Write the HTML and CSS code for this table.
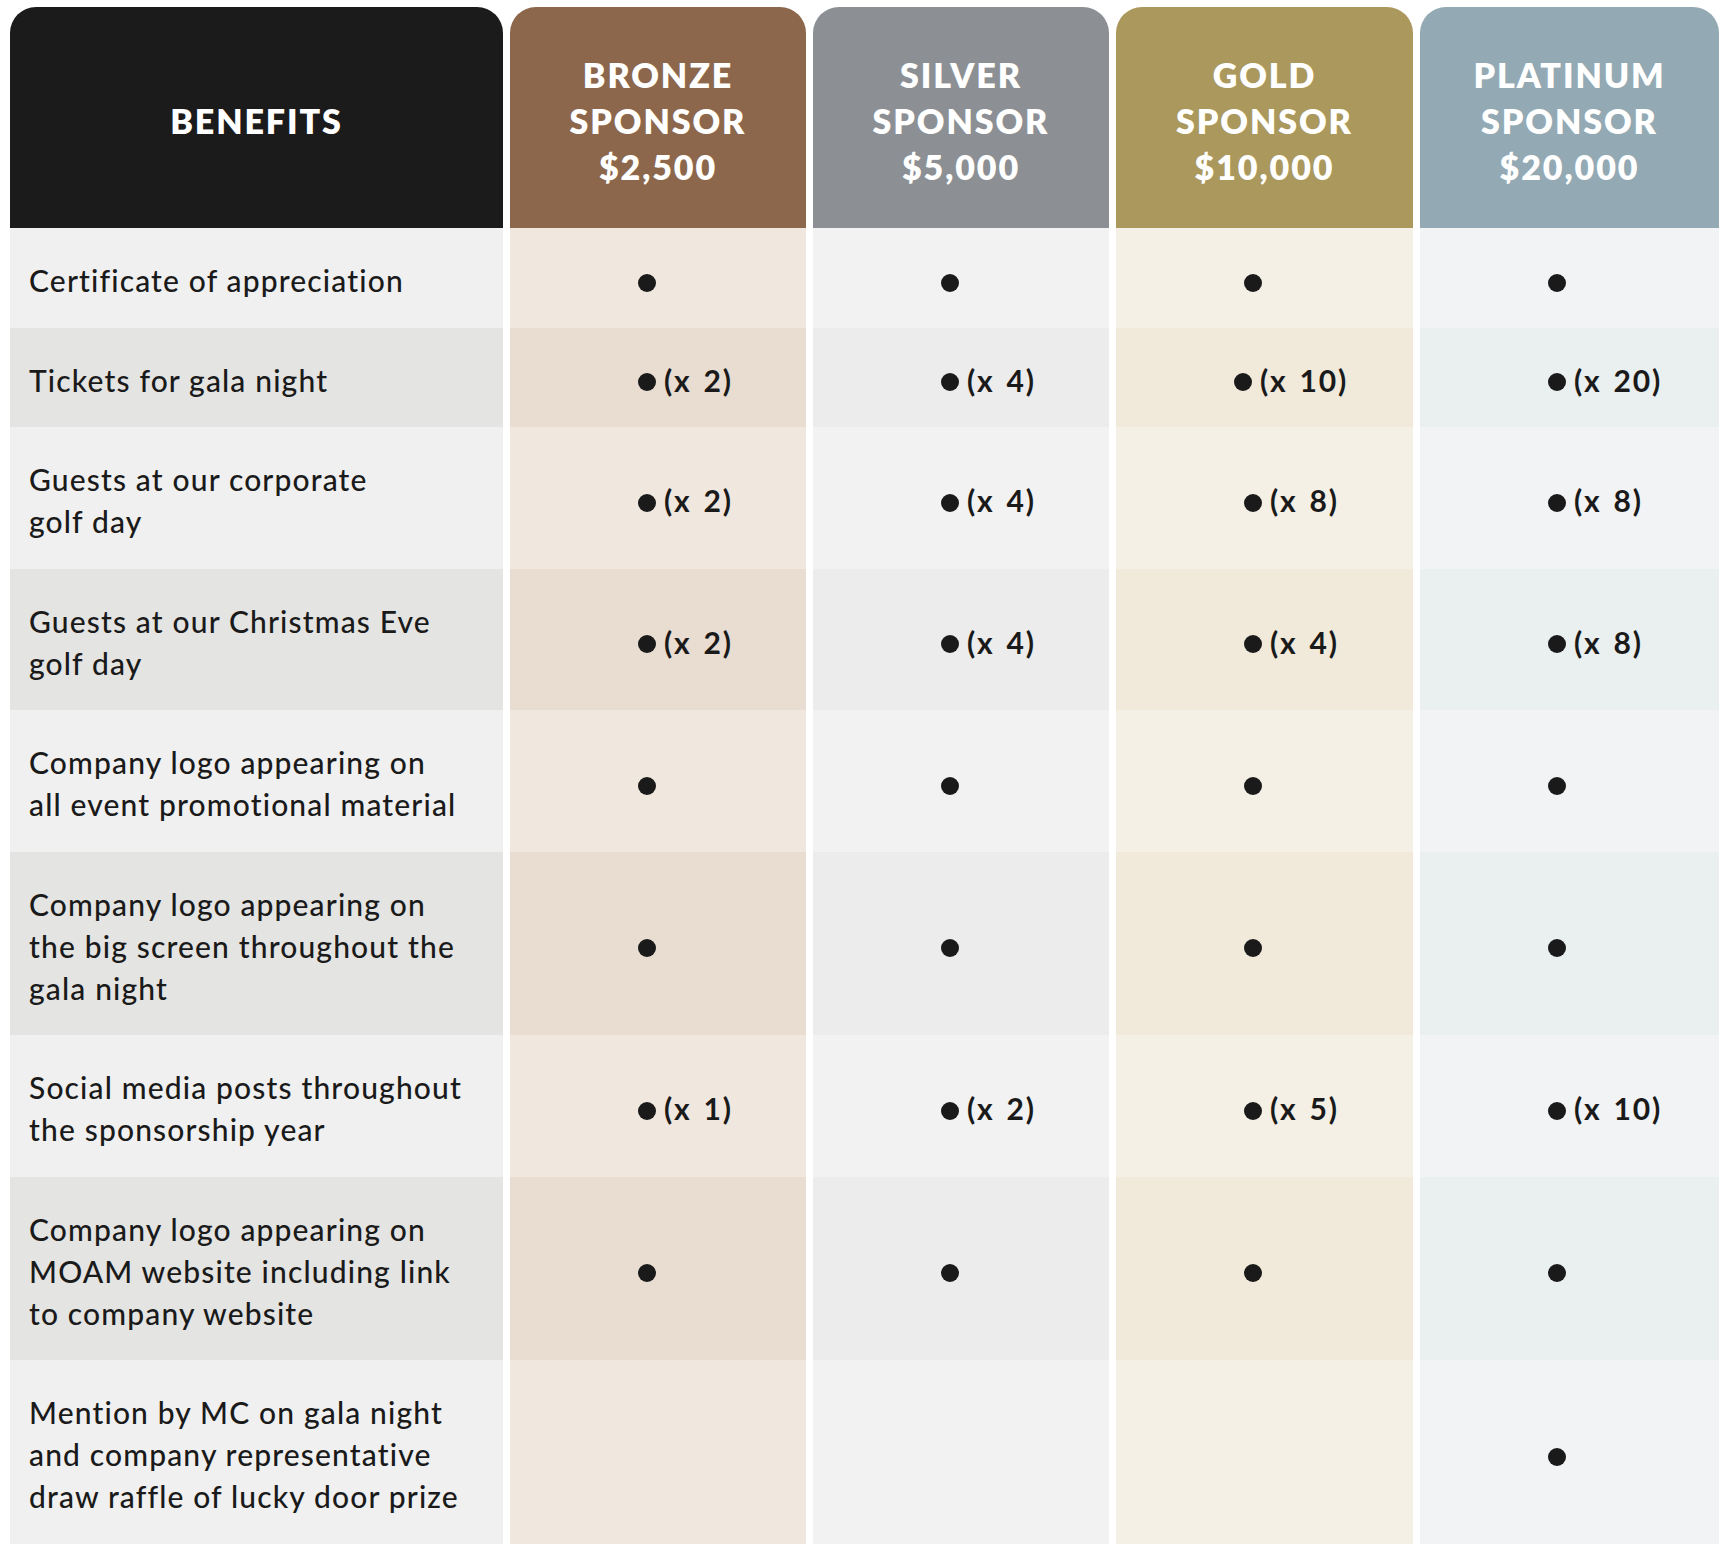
FILE: index.html
```html
<!DOCTYPE html>
<html lang="en">
<head>
<meta charset="utf-8">
<title>Sponsorship Benefits</title>
<link rel="stylesheet" href="styles.css">
</head>
<body>
<div class="sheet">
  <div class="row head">
    <div class="hcell c-benefit">BENEFITS</div>
    <div class="hcell c-bronze">BRONZE<br>SPONSOR<br>$2,500</div>
    <div class="hcell c-silver">SILVER<br>SPONSOR<br>$5,000</div>
    <div class="hcell c-gold">GOLD<br>SPONSOR<br>$10,000</div>
    <div class="hcell c-plat">PLATINUM<br>SPONSOR<br>$20,000</div>
  </div>

  <div class="row">
    <div class="cell c-benefit">Certificate of appreciation</div>
    <div class="cell mark c-bronze"><span class="dot"></span></div>
    <div class="cell mark c-silver"><span class="dot"></span></div>
    <div class="cell mark c-gold"><span class="dot"></span></div>
    <div class="cell mark c-plat"><span class="dot"></span></div>
  </div>

  <div class="row alt">
    <div class="cell c-benefit">Tickets for gala night</div>
    <div class="cell mark c-bronze"><span class="dot"></span><span class="qty">(x 2)</span></div>
    <div class="cell mark c-silver"><span class="dot"></span><span class="qty">(x 4)</span></div>
    <div class="cell mark mark--shift c-gold"><span class="dot"></span><span class="qty">(x 10)</span></div>
    <div class="cell mark c-plat"><span class="dot"></span><span class="qty">(x 20)</span></div>
  </div>

  <div class="row">
    <div class="cell c-benefit">Guests at our corporate<br>golf day</div>
    <div class="cell mark c-bronze"><span class="dot"></span><span class="qty">(x 2)</span></div>
    <div class="cell mark c-silver"><span class="dot"></span><span class="qty">(x 4)</span></div>
    <div class="cell mark c-gold"><span class="dot"></span><span class="qty">(x 8)</span></div>
    <div class="cell mark c-plat"><span class="dot"></span><span class="qty">(x 8)</span></div>
  </div>

  <div class="row alt">
    <div class="cell c-benefit">Guests at our Christmas Eve<br>golf day</div>
    <div class="cell mark c-bronze"><span class="dot"></span><span class="qty">(x 2)</span></div>
    <div class="cell mark c-silver"><span class="dot"></span><span class="qty">(x 4)</span></div>
    <div class="cell mark c-gold"><span class="dot"></span><span class="qty">(x 4)</span></div>
    <div class="cell mark c-plat"><span class="dot"></span><span class="qty">(x 8)</span></div>
  </div>

  <div class="row">
    <div class="cell c-benefit">Company logo appearing on<br>all event promotional material</div>
    <div class="cell mark c-bronze"><span class="dot"></span></div>
    <div class="cell mark c-silver"><span class="dot"></span></div>
    <div class="cell mark c-gold"><span class="dot"></span></div>
    <div class="cell mark c-plat"><span class="dot"></span></div>
  </div>

  <div class="row alt">
    <div class="cell c-benefit">Company logo appearing on<br>the big screen throughout the<br>gala night</div>
    <div class="cell mark c-bronze"><span class="dot"></span></div>
    <div class="cell mark c-silver"><span class="dot"></span></div>
    <div class="cell mark c-gold"><span class="dot"></span></div>
    <div class="cell mark c-plat"><span class="dot"></span></div>
  </div>

  <div class="row">
    <div class="cell c-benefit">Social media posts throughout<br>the sponsorship year</div>
    <div class="cell mark c-bronze"><span class="dot"></span><span class="qty">(x 1)</span></div>
    <div class="cell mark c-silver"><span class="dot"></span><span class="qty">(x 2)</span></div>
    <div class="cell mark c-gold"><span class="dot"></span><span class="qty">(x 5)</span></div>
    <div class="cell mark c-plat"><span class="dot"></span><span class="qty">(x 10)</span></div>
  </div>

  <div class="row alt">
    <div class="cell c-benefit">Company logo appearing on<br>MOAM website including link<br>to company website</div>
    <div class="cell mark c-bronze"><span class="dot"></span></div>
    <div class="cell mark c-silver"><span class="dot"></span></div>
    <div class="cell mark c-gold"><span class="dot"></span></div>
    <div class="cell mark c-plat"><span class="dot"></span></div>
  </div>

  <div class="row">
    <div class="cell c-benefit">Mention by MC on gala night<br>and company representative<br>draw raffle of lucky door prize</div>
    <div class="cell mark c-bronze"></div>
    <div class="cell mark c-silver"></div>
    <div class="cell mark c-gold"></div>
    <div class="cell mark c-plat"><span class="dot"></span></div>
  </div>
</div>
</body>
</html>
```

FILE: styles.css
```css
html, body {
  background: #ffffff;
}

body {
  margin: 7px 9px 0 10px;
  font-family: "Lato", "Open Sans", "Liberation Sans", sans-serif;
  color: #1a1a1a;
}

.sheet {
  display: grid;
  grid-template-columns: 493px 296px 296px 297px 299px;
  column-gap: 7px;
  width: 1709px;
}

.row {
  display: contents;
}

/* header */
.hcell {
  height: 221px;
  box-sizing: border-box;
  padding-top: 6px;
  border-radius: 26px 26px 0 0;
  display: flex;
  align-items: center;
  justify-content: center;
  text-align: center;
  color: #ffffff;
  font-size: 34px;
  font-weight: 800;
  line-height: 46px;
  letter-spacing: 1.9px;
}

.head .c-benefit { background: #1b1b1b; }
.head .c-bronze  { background: #8d674b; }
.head .c-silver  { background: #8c9094; }
.head .c-gold    { background: #ab985d; }
.head .c-plat    { background: #93a9b4; }

/* body cells */
.cell {
  font-size: 30px;
  font-weight: 500;
  line-height: 42px;
  padding: 31px 0 26.5px;
}

.cell.c-benefit {
  padding-left: 19px;
  white-space: nowrap;
  letter-spacing: 1.15px;
}

.mark {
  display: flex;
  align-items: center;
  padding-left: 128px;
}

.mark--shift {
  padding-left: 118px;
}

.dot {
  width: 18px;
  height: 18px;
  margin-top: 5px;
  border-radius: 50%;
  background: #1a1a1a;
  flex: none;
}

.qty {
  margin-left: 8px;
  font-weight: 700;
  letter-spacing: 1.8px;
  word-spacing: 3px;
  white-space: nowrap;
}

/* column tints, odd rows */
.c-benefit { background: #f0f0f0; }
.c-bronze  { background: #f0e8df; }
.c-silver  { background: #f2f2f2; }
.c-gold    { background: #f4f0e5; }
.c-plat    { background: #f2f3f4; }

/* column tints, alternate rows */
.alt .c-benefit { background: #e4e4e2; }
.alt .c-bronze  { background: #e9ddd2; }
.alt .c-silver  { background: #ececec; }
.alt .c-gold    { background: #f1eada; }
.alt .c-plat    { background: #eaeff0; }
```
